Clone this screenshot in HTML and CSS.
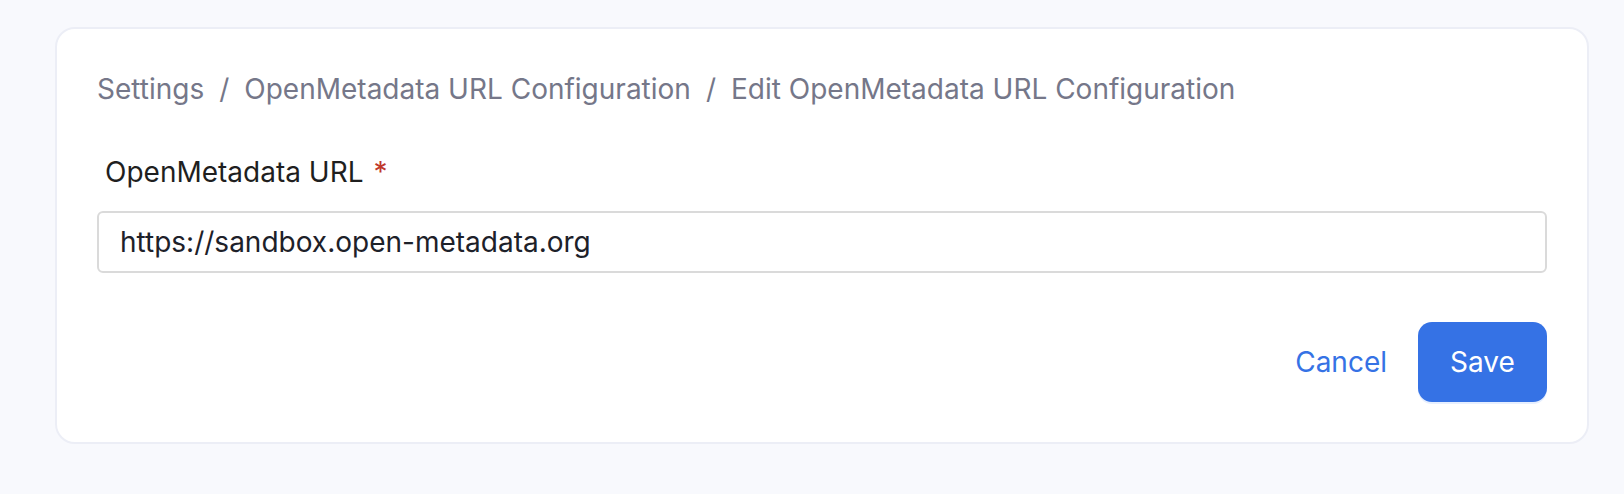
FILE: index.html
```html
<!DOCTYPE html>
<html lang="en">
<head>
<meta charset="utf-8">
<title>Edit OpenMetadata URL Configuration</title>
<link rel="stylesheet" href="styles.css">
</head>
<body>
<div class="page">
  <div class="card">
    <nav class="breadcrumb">
      <span class="crumb">Settings</span><span class="sep">/</span><span class="crumb">OpenMetadata URL Configuration</span><span class="sep">/</span><span class="crumb">Edit OpenMetadata URL Configuration</span>
    </nav>
    <form class="form">
      <label class="label" for="url">OpenMetadata URL <span class="req">*</span></label>
      <input class="input" id="url" type="text" value="https://sandbox.open-metadata.org">
      <div class="actions">
        <button type="button" class="btn-link">Cancel</button>
        <button type="button" class="btn-primary">Save</button>
      </div>
    </form>
  </div>
</div>
</body>
</html>
```

FILE: styles.css
```css
* { box-sizing: border-box; }
html, body {
  margin: 0;
  padding: 0;
  background: #f8f9fd;
  font-family: Inter, "Noto Sans", sans-serif;
}
.page {
  padding: 27px 35px 0 55px;
}
.card {
  background: #ffffff;
  border: 2px solid #eceef6;
  border-radius: 20px;
  padding: 39px 40px 40px 40px;
}
.breadcrumb {
  font-size: 28px;
  line-height: 42px;
  color: #757789;
  white-space: nowrap;
}
.sep {
  margin: 0 15px;
}
.form {
  display: flex;
  flex-direction: column;
  margin-top: 41px;
}
.label {
  font-size: 28px;
  line-height: 42px;
  color: #1f1f1f;
  padding-left: 8px;
  margin-bottom: 18px;
}
.req {
  color: #c0392b;
  margin-left: 2px;
}
.input {
  height: 62px;
  width: 100%;
  border: 2px solid #dadada;
  border-radius: 6px;
  padding: 0 21px;
  font-family: inherit;
  font-size: 28px;
  color: #1d2129;
  background: #fff;
  outline: none;
}
.actions {
  display: flex;
  justify-content: flex-end;
  align-items: center;
  gap: 10px;
  margin-top: 49px;
}
.btn-link {
  height: 80px;
  padding: 0 21px;
  border: 0;
  background: transparent;
  color: #3572e5;
  font-family: inherit;
  font-size: 28px;
  cursor: pointer;
}
.btn-primary {
  height: 80px;
  width: 129px;
  border: 0;
  border-radius: 14px;
  background: #3572e5;
  color: #ffffff;
  font-family: inherit;
  font-size: 28px;
  box-shadow: 0 2px 0 rgba(5, 95, 255, 0.1);
  cursor: pointer;
}
```
